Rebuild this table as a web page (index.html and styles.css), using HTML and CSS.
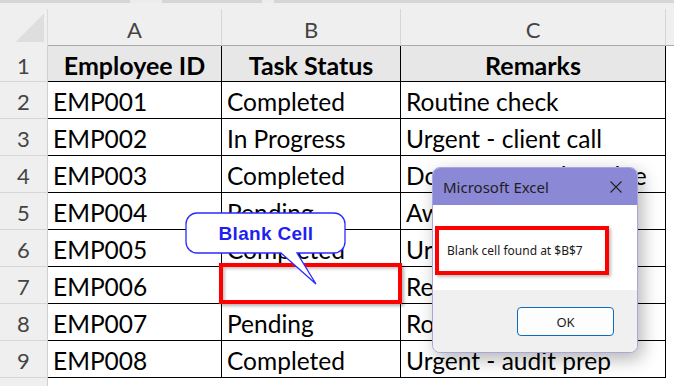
FILE: index.html
```html
<!DOCTYPE html>
<html>
<head>
<meta charset="utf-8">
<link rel="stylesheet" href="styles.css">
</head>
<body>
<div class="sheet">
  <div class="topstrip"></div>
  <div class="colhead">
    <div class="corner"><div class="tri"></div></div>
    <div class="ch">A</div>
    <div class="ch">B</div>
    <div class="ch">C</div>
    <div class="ch chd"></div>
  </div>
  <div class="row r1">
    <div class="rh">1</div>
    <div class="c hd">Employee ID</div>
    <div class="c hd">Task Status</div>
    <div class="c hd">Remarks</div>
    <div class="d"></div>
  </div>
  <div class="row">
    <div class="rh">2</div><div class="c">EMP001</div><div class="c">Completed</div><div class="c">Routine check</div><div class="d"></div>
  </div>
  <div class="row">
    <div class="rh">3</div><div class="c">EMP002</div><div class="c">In Progress</div><div class="c">Urgent - client call</div><div class="d"></div>
  </div>
  <div class="row">
    <div class="rh">4</div><div class="c">EMP003</div><div class="c">Completed</div><div class="c">Document update due</div><div class="d"></div>
  </div>
  <div class="row">
    <div class="rh">5</div><div class="c">EMP004</div><div class="c">Pending</div><div class="c">Awaiting approval</div><div class="d"></div>
  </div>
  <div class="row">
    <div class="rh">6</div><div class="c">EMP005</div><div class="c">Completed</div><div class="c">Urgent - follow up</div><div class="d"></div>
  </div>
  <div class="row">
    <div class="rh">7</div><div class="c">EMP006</div><div class="c"></div><div class="c">Review pending</div><div class="d"></div>
  </div>
  <div class="row">
    <div class="rh">8</div><div class="c">EMP007</div><div class="c">Pending</div><div class="c">Routine check</div><div class="d"></div>
  </div>
  <div class="row">
    <div class="rh">9</div><div class="c">EMP008</div><div class="c">Completed</div><div class="c">Urgent - audit prep</div><div class="d"></div>
  </div>
  <div class="row rlast">
    <div class="rh"></div><div class="e"></div>
  </div>

  <div class="selbox"></div>

  <div class="callout">
    <svg class="callout-shape" width="162" height="76" viewBox="0 0 162 76">
      <path d="M12,1 H149 A11,11 0 0 1 160,12 V30 A11,11 0 0 1 149,41 H112 L131,72 L96,41 H12 A11,11 0 0 1 1,30 V12 A11,11 0 0 1 12,1 Z" fill="#ffffff" stroke="#2b2bff" stroke-width="1.3"/>
    </svg>
    <div class="callout-text">Blank Cell</div>
  </div>

  <div class="dialog">
    <div class="dtitle">
      <span>Microsoft Excel</span>
      <svg class="dclose" width="12" height="12" viewBox="0 0 12 12">
        <path d="M0.5,0.5 L11.5,11.5 M11.5,0.5 L0.5,11.5" stroke="#222" stroke-width="1.1" fill="none"/>
      </svg>
    </div>
    <div class="dbody">
      <div class="dmsg">Blank cell found at $B$7</div>
    </div>
    <div class="dfoot">
      <div class="okbtn">OK</div>
    </div>
  </div>
</div>
</body>
</html>
```

FILE: styles.css
```css
* { box-sizing: border-box; }
html, body { margin: 0; padding: 0; }
body {
  width: 674px;
  height: 386px;
  overflow: hidden;
  background: #ffffff;
  font-family: Lato, "Open Sans", sans-serif;
}
.sheet {
  position: relative;
  width: 674px;
  height: 386px;
  overflow: hidden;
}
.topstrip {
  height: 3px;
  background: linear-gradient(to right, #d6d6d6 0 130px, #ececec 130px 162px, #d6d6d6 162px 262px, #ececec 262px 274px, #d6d6d6 274px);
}
.colhead {
  display: grid;
  grid-template-columns: 48px 174px 179px 265px 1fr;
  padding-top: 6px;
  background: #efefef;
}
.corner {
  height: 37px;
  border-right: 1px solid #dcdcdc;
  display: flex;
  padding: 4px 0 0 16px;
}
.tri {
  width: 28px;
  height: 29px;
  background: linear-gradient(to top left, #dedede 50%, transparent 50%);
}
.ch {
  height: 37px;
  border-right: 1px solid #d6d6d6;
  border-bottom: 1px solid #ababab;
  display: flex;
  align-items: center;
  justify-content: center;
  padding-top: 5px;
  font-size: 22px;
  color: #444;
}
.chd { border-right: none; }
.row {
  display: grid;
  grid-template-columns: 48px 174px 179px 265px 1fr;
  height: 37px;
}
.row.r1 { height: 36px; }
.rh {
  background: #efefef;
  border-right: 1px solid #cfcfcf;
  border-bottom: 1px solid #d6d6d6;
  display: flex;
  align-items: center;
  justify-content: center;
  padding-top: 3px;
  font-size: 22px;
  color: #444;
}
.c {
  border-right: 1px solid #000;
  border-bottom: 1px solid #000;
  display: flex;
  align-items: center;
  padding: 2px 0 0 5px;
  font-size: 24.5px;
  color: #000;
  white-space: nowrap;
  overflow: hidden;
}
.hd {
  background: #e7e7e7;
  font-weight: bold;
  font-size: 25px;
  justify-content: center;
  padding-left: 0;
}
.d { background: #ffffff; }
.rlast { grid-template-columns: 48px 1fr; }
.e { background: #fff; }

.selbox {
  position: absolute;
  left: 219px;
  top: 263px;
  width: 183px;
  height: 41px;
  border: 4px solid #ff0000;
  box-shadow: 2px 2px 3px rgba(0,0,0,0.3), inset 2px 2px 3px rgba(0,0,0,0.22);
}

.callout {
  position: absolute;
  left: 185px;
  top: 212px;
  width: 162px;
  height: 76px;
}
.callout-shape { display: block; }
.callout-text {
  position: absolute;
  left: 1px;
  top: 1px;
  width: 160px;
  height: 41px;
  display: flex;
  align-items: center;
  justify-content: center;
  font-family: "Liberation Sans", Arial, sans-serif;
  font-weight: bold;
  font-size: 19px;
  letter-spacing: 0.3px;
  color: #1f1ff0;
}

.dialog {
  position: absolute;
  left: 432px;
  top: 167px;
  width: 206px;
  height: 186px;
  border: 1px solid #a9a6de;
  border-radius: 8px;
  overflow: hidden;
  background: #fff;
  box-shadow: 4px 6px 18px rgba(0,0,0,0.3);
  font-family: "Noto Sans", "Open Sans", sans-serif;
  display: flex;
  flex-direction: column;
}
.dtitle {
  height: 37px;
  background: #8b88d5;
  display: flex;
  align-items: center;
  justify-content: space-between;
  padding: 0 15px 0 10px;
  font-size: 15px;
  color: #1e1e1e;
}
.dbody {
  height: 85px;
  background: #fff;
  padding: 21px 0 0 2px;
}
.dmsg {
  width: 174px;
  height: 49px;
  border: 4px solid #ff0000;
  box-shadow: 2px 2px 3px rgba(0,0,0,0.25);
  display: flex;
  align-items: center;
  padding-left: 8px;
  font-size: 12px;
  color: #1a1a1a;
  white-space: nowrap;
}
.dfoot {
  flex: 1;
  background: #f0f0f0;
  display: flex;
  justify-content: flex-end;
  align-items: flex-start;
  padding: 17px 23px 0 0;
}
.okbtn {
  width: 97px;
  height: 29px;
  border: 1px solid #0f6cbd;
  border-radius: 4px;
  background: #fdfdfd;
  display: flex;
  align-items: center;
  justify-content: center;
  font-size: 13px;
  color: #1a1a1a;
}
```
